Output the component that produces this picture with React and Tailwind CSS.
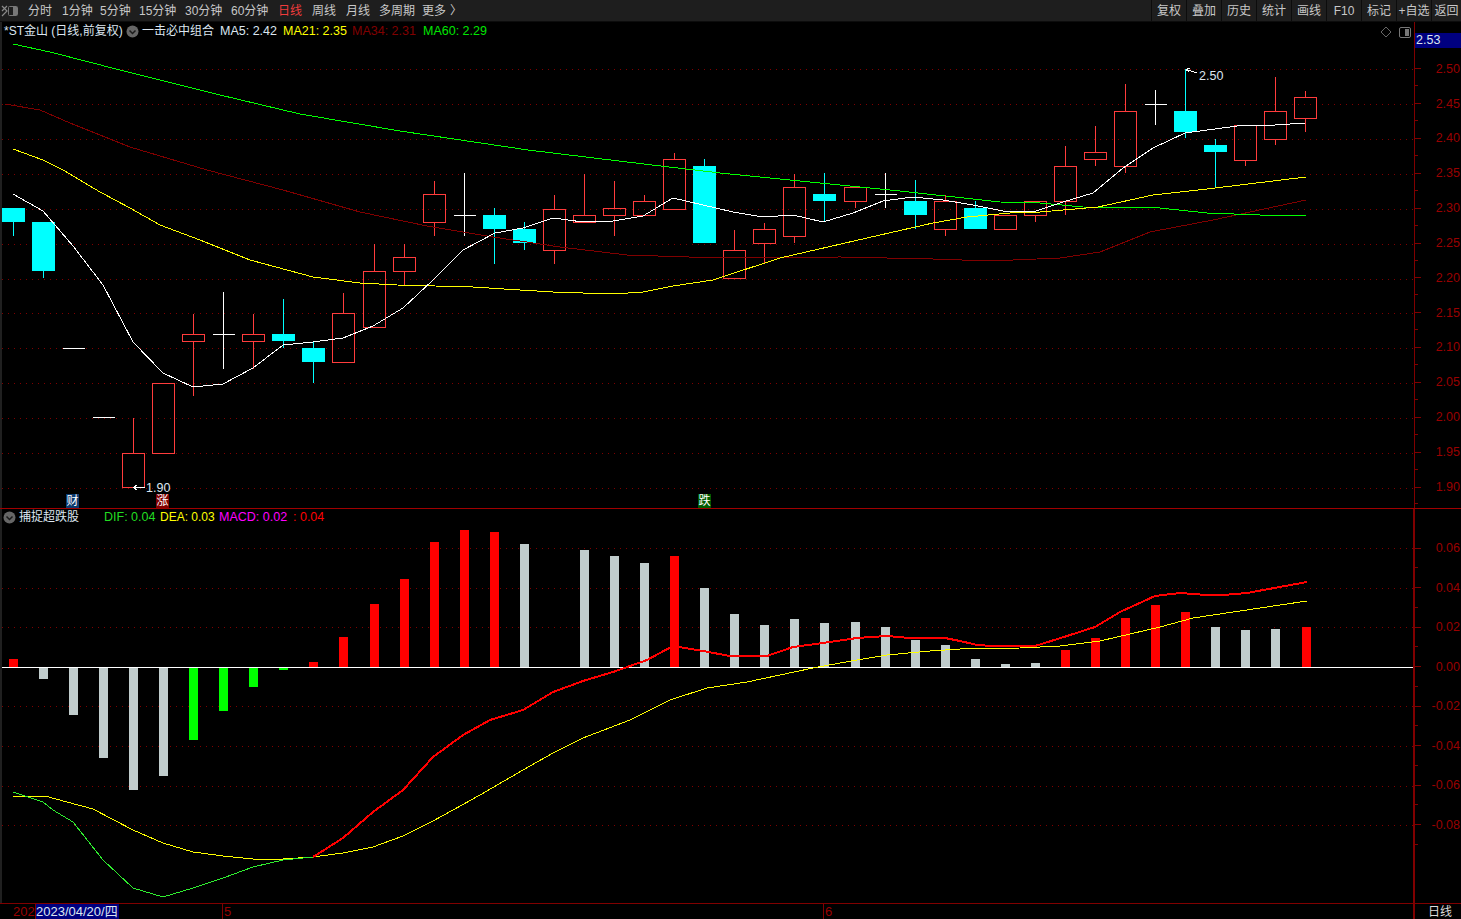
const tabs = [
  { label: "分时", cls: "w-[34px]" },
  { label: "1分钟", cls: "w-[38px]" },
  { label: "5分钟", cls: "w-[39px]" },
  { label: "15分钟", cls: "w-[46px]" },
  { label: "30分钟", cls: "w-[46px]" },
  { label: "60分钟", cls: "w-[47px]" },
  { label: "日线", cls: "w-[34px] text-[#f03c3c]" },
  { label: "周线", cls: "w-[34px]" },
  { label: "月线", cls: "w-[33px]" },
  { label: "多周期", cls: "w-[43px]" },
  { label: "更多", cls: "w-[28px]" },
];

const tools = ["复权", "叠加", "历史", "统计", "画线", "F10", "标记", "+自选"];

// [type, bodyTop, bodyBottom, wickTop, wickBottom], u = red, d = cyan, x = doji
const candles = [
  ["d", 208, 222, 208, 236],
  ["d", 222, 271, 222, 278],
  ["x", 348, 348, 348, 348],
  ["x", 417, 417, 417, 417],
  ["u", 453, 487, 418, 487],
  ["u", 383, 453, 383, 453],
  ["u", 334, 341, 314, 396],
  ["x", 334, 334, 292, 369],
  ["u", 334, 341, 314, 369],
  ["d", 334, 341, 299, 348],
  ["d", 348, 362, 341, 383],
  ["u", 313, 362, 293, 362],
  ["u", 271, 327, 244, 327],
  ["u", 257, 271, 244, 285],
  ["u", 194, 222, 181, 236],
  ["x", 215, 215, 173, 236],
  ["d", 215, 229, 208, 264],
  ["d", 229, 243, 222, 250],
  ["u", 209, 250, 195, 264],
  ["u", 215, 222, 174, 222],
  ["u", 208, 215, 181, 236],
  ["u", 201, 215, 195, 215],
  ["u", 159, 209, 153, 209],
  ["d", 166, 243, 159, 243],
  ["u", 250, 278, 230, 278],
  ["u", 229, 243, 223, 264],
  ["u", 187, 236, 174, 243],
  ["d", 194, 201, 173, 222],
  ["u", 187, 201, 187, 208],
  ["x", 194, 194, 173, 208],
  ["d", 201, 215, 180, 229],
  ["u", 201, 229, 195, 236],
  ["d", 208, 229, 201, 229],
  ["u", 215, 229, 215, 229],
  ["u", 201, 215, 201, 222],
  ["u", 166, 201, 146, 215],
  ["u", 152, 159, 126, 166],
  ["u", 111, 166, 84, 173],
  ["x", 104, 104, 90, 125],
  ["d", 111, 132, 69, 138],
  ["d", 145, 152, 139, 187],
  ["u", 125, 160, 125, 166],
  ["u", 111, 139, 77, 145],
  ["u", 97, 118, 91, 132],
];

const ma5 = "13,194 43,211 73,246 103,285 133,342 163,373 193,387 223,384 253,368 283,345 313,342 343,338 373,326 403,308 433,280 463,250 495,233 523,228 553,218 583,222 613,221 643,216 673,198 703,205 733,212 763,217 793,215 823,222 853,213 883,201 913,197 943,200 973,205 1003,211 1033,212 1063,202 1093,193 1123,168 1153,148 1185,133 1215,129 1245,125 1275,125 1305,123";
const ma21 = "13,149 43,160 63,170 100,192 130,208 160,225 200,240 250,260 313,277 360,283 397,285 473,287 520,290 553,292 583,293 613,294 643,292 673,286 713,280 780,258 867,238 933,223 967,217 1010,213 1040,212 1098,207 1153,195 1207,189 1306,177";
const ma34 = "5,104 40,110 70,123 130,147 207,170 283,190 360,212 427,226 493,237 560,247 627,255 720,258 840,257 933,259 990,261 1060,258 1100,252 1150,232 1213,220 1306,200";
const ma60 = "13,44 50,52 120,70 220,95 300,114 400,131 528,150 627,162 720,173 800,181 900,191 1000,202 1040,203 1083,207 1160,208 1207,213 1260,215 1306,215";

// [left, top, bottom, color]
const macdBars = [
  [9, 659, 667, "r"], [39, 667, 679, "g"], [69, 667, 715, "g"], [99, 667, 758, "g"],
  [129, 667, 790, "g"], [159, 667, 776, "g"], [189, 667, 740, "l"], [219, 667, 711, "l"],
  [249, 667, 687, "l"], [279, 667, 670, "l"], [309, 662, 667, "r"], [339, 637, 667, "r"],
  [370, 604, 667, "r"], [400, 579, 667, "r"], [430, 542, 667, "r"], [460, 530, 667, "r"],
  [490, 532, 667, "r"], [520, 544, 667, "g"], [580, 550, 667, "g"], [610, 556, 667, "g"],
  [640, 563, 667, "g"], [670, 556, 667, "r"], [700, 588, 667, "g"], [730, 614, 667, "g"],
  [760, 625, 667, "g"], [790, 619, 667, "g"], [820, 623, 667, "g"], [851, 622, 667, "g"],
  [881, 627, 667, "g"], [911, 640, 667, "g"], [941, 645, 667, "g"], [971, 659, 667, "g"],
  [1001, 664, 667, "g"], [1031, 663, 667, "g"], [1061, 650, 667, "r"], [1091, 638, 667, "r"],
  [1121, 618, 667, "r"], [1151, 605, 667, "r"], [1181, 612, 667, "r"], [1211, 627, 667, "g"],
  [1241, 630, 667, "g"], [1271, 629, 667, "g"], [1302, 627, 667, "r"],
];
const barColor = { r: "#ff0000", g: "#c0cccc", l: "#00ff00" };

const difGreen = "13,792 43,802 53,810 73,822 103,860 133,888 163,897 193,888 223,878 253,867 283,860 313,857";
const difRed = "313,857 343,838 373,812 403,790 433,757 463,735 490,720 523,710 553,692 583,681 613,672 647,660 673,646 703,651 730,656 767,656 793,647 823,643 857,638 887,636 910,638 945,638 960,641 977,645 993,646 1035,646 1067,636 1095,627 1120,612 1155,596 1180,593 1207,595 1223,595 1247,593 1307,582";
const dea = "13,796 45,796 67,802 93,809 133,830 163,843 193,852 223,856 253,859 283,859 313,857 343,853 373,847 403,836 433,821 453,810 480,795 523,770 553,753 583,738 630,720 670,700 707,688 747,682 813,668 857,660 887,655 930,651 960,649 1020,648 1060,646 1100,641 1160,627 1193,618 1307,601";

const mainGrid = [69, 104, 139, 174, 209, 244, 279, 313, 348, 383, 418, 453, 488];
const subGrid = [548, 588, 627, 706, 746, 786, 825];
const mainLabels = ["2.50", "2.45", "2.40", "2.35", "2.30", "2.25", "2.20", "2.15", "2.10", "2.05", "2.00", "1.95", "1.90"];
const subLabels = ["0.06", "0.04", "0.02", "0.00", "-0.02", "-0.04", "-0.06", "-0.08"];

function Candle({ data, i }) {
  const [type, top, bottom, wickTop, wickBottom] = data;
  const cx = Math.floor(13.3 + 30.0625 * i) + 0.5;
  const color = type === "u" ? "#ff3c3c" : type === "d" ? "#00ffff" : "#ffffff";
  return (
    <g>
      {wickTop < top && <line x1={cx} x2={cx} y1={wickTop} y2={top} stroke={color} />}
      {wickBottom > bottom && <line x1={cx} x2={cx} y1={bottom} y2={wickBottom} stroke={color} />}
      {type === "u" && (
        <rect x={cx - 11} y={top + 0.5} width={22} height={bottom - top} fill="none" stroke={color} />
      )}
      {type === "d" && <rect x={cx - 11.5} y={top} width={23} height={bottom - top} fill={color} />}
      {type === "x" && <line x1={cx - 11} x2={cx + 11} y1={top + 0.5} y2={top + 0.5} stroke={color} />}
    </g>
  );
}

function GridLines({ rows }) {
  return rows.map((y) => (
    <line key={y} x1={2} x2={1414} y1={y + 0.5} y2={y + 0.5} stroke="#800000" strokeDasharray="1 5" />
  ));
}

function Line({ points, color, width = 1 }) {
  return <polyline points={points} fill="none" stroke={color} strokeWidth={width} />;
}

function ChevronDot() {
  return (
    <svg width="13" height="13" viewBox="0 0 13 13" className="shrink-0">
      <circle cx="6.5" cy="6.5" r="6" fill="#666666" />
      <path d="M3.5 5.5 L6.5 8.5 L9.5 5.5" fill="none" stroke="#1a1a1a" strokeWidth="1.5" />
    </svg>
  );
}

function AxisRow({ label, rowClass }) {
  return (
    <div className={`relative flex items-center justify-between pr-[1px] ${rowClass}`}>
      <div className="h-px w-[6px] bg-[#800000]" />
      <span>{label}</span>
      <div className="absolute bottom-0 left-0 h-px w-[3px] bg-[#800000]" />
    </div>
  );
}

export default function App() {
  return (
    <div className="flex h-[919px] w-[1461px] flex-col overflow-hidden bg-black text-[12.5px] leading-none text-[#dce6f0] [font-family:'Liberation_Sans','Noto_Sans_CJK_SC',sans-serif]">
      {/* top toolbar */}
      <div className="flex h-[22px] shrink-0 items-center justify-between border-b border-[#0c0c0c] bg-[#1e1e1e] text-[12px] text-[#c8c8c8]">
        <div className="flex items-center">
          <svg width="18" height="14" viewBox="0 0 18 14" className="ml-[1px] mr-[9px] shrink-0">
            <path d="M1 2 L6 7 L1 12 M6 2 L1 7" fill="none" stroke="#8a8a8a" strokeWidth="1.2" />
            <rect x="7.5" y="2.5" width="9" height="9" rx="1" fill="#1e1e1e" stroke="#777777" />
            <rect x="12" y="3" width="4" height="8" fill="#777777" />
          </svg>
          {tabs.map((t) => (
            <span key={t.label} className={`shrink-0 whitespace-nowrap ${t.cls}`}>
              {t.label}
            </span>
          ))}
          <span className="text-[12px]">〉</span>
        </div>
        <div className="flex h-full items-center">
          {tools.map((t) => (
            <span
              key={t}
              className="flex h-full w-[35px] items-center justify-center whitespace-nowrap border-l border-[#0c0c0c]"
            >
              {t}
            </span>
          ))}
          <span className="flex h-full w-[30px] items-center justify-center whitespace-nowrap border-l border-[#0c0c0c]">
            返回
          </span>
        </div>
      </div>

      {/* price panel */}
      <div className="flex h-[486px] shrink-0">
        <div className="relative h-full w-[1415px] shrink-0 border-l-2 border-r border-l-[#202020] border-r-[#800000]">
          <svg width="1412" height="486" viewBox="2 22 1412 486" shapeRendering="crispEdges" className="block">
            <GridLines rows={mainGrid} />
            {candles.map((c, i) => (
              <Candle key={i} data={c} i={i} />
            ))}
            <Line points={ma34} color="#800000" />
            <Line points={ma60} color="#00ff00" />
            <Line points={ma21} color="#ffff00" />
            <Line points={ma5} color="#ffffff" />
            <path d="M133 487.5 L145 487.5 M133 487.5 L137 485 M133 487.5 L137 490" stroke="#ffffff" fill="none" />
            <path d="M1186 69.5 L1197 73 M1186 69.5 L1190 68 M1186 69.5 L1189 72" stroke="#ffffff" fill="none" />
            <text x="146" y="492" fill="#dce6f0" fontSize="12.5">1.90</text>
            <text x="1199" y="80" fill="#dce6f0" fontSize="12.5">2.50</text>
          </svg>

          {/* legend */}
          <div className="absolute left-[2px] top-[2px] flex h-[14px] items-center whitespace-nowrap">
            <span className="w-[122px] text-[12px]">*ST金山 (日线,前复权)</span>
            <ChevronDot />
            <span className="ml-[3px] w-[78px] text-[12px]">一击必中组合</span>
            <span className="w-[63px]">MA5: 2.42</span>
            <span className="w-[69px] text-[#ffff00]">MA21: 2.35</span>
            <span className="w-[71px] text-[#800000]">MA34: 2.31</span>
            <span className="text-[#00e600]">MA60: 2.29</span>
          </div>

          <div className="absolute right-[3px] top-[4px] flex items-center gap-[7px]">
            <svg width="12" height="12" viewBox="0 0 12 12">
              <path d="M6 1 L11 6 L6 11 L1 6 Z" fill="none" stroke="#666666" />
            </svg>
            <svg width="12" height="11" viewBox="0 0 12 11">
              <rect x="0.5" y="0.5" width="11" height="10" rx="1.5" fill="none" stroke="#777777" />
              <rect x="6" y="2" width="4" height="7" fill="#777777" />
            </svg>
          </div>

          <span className="absolute left-[64px] top-[472px] flex h-[14px] w-[13px] items-center justify-center bg-[#0c3a6e] text-[12px] text-white">财</span>
          <span className="absolute left-[154px] top-[472px] flex h-[14px] w-[13px] items-center justify-center bg-[#800000] text-[12px] text-white">涨</span>
          <span className="absolute left-[696px] top-[472px] flex h-[14px] w-[13px] items-center justify-center bg-[#005a00] text-[12px] text-white">跌</span>
        </div>

        <div className="flex-1 pt-[11px] text-[#990000]">
          <div className="flex h-[15px] items-center bg-[#000080] pl-[1px] text-[#dce6f0]">2.53</div>
          <div className="mt-[3.5px]">
            {mainLabels.map((l) => (
              <AxisRow key={l} label={l} rowClass="h-[34.85px]" />
            ))}
          </div>
        </div>
      </div>

      {/* macd panel */}
      <div className="flex h-[395px] shrink-0 border-t-[1.5px] border-[#a00000]">
        <div className="relative h-full w-[1415px] shrink-0 border-l-2 border-r-2 border-l-[#202020] border-r-[#800000]">
          <svg width="1411" height="394" viewBox="2 509 1411 394" shapeRendering="crispEdges" className="block">
            <GridLines rows={subGrid} />
            {macdBars.map(([x, top, bottom, c]) => (
              <rect key={x} x={x} y={top} width={9} height={bottom - top} fill={barColor[c]} />
            ))}
            <line x1={2} x2={1414} y1={667.5} y2={667.5} stroke="#ffffff" />
            <Line points={dea} color="#ffff00" />
            <Line points={difGreen} color="#2fee2f" />
            <Line points={difRed} color="#ff0000" width={2} />
          </svg>

          <div className="absolute left-[1px] top-[1px] flex h-[14px] items-center whitespace-nowrap">
            <ChevronDot />
            <span className="ml-[3px] w-[85px] text-[12px]">捕捉超跌股</span>
            <span className="w-[56px] text-[#22dd22]">DIF: 0.04</span>
            <span className="w-[59px] text-[12px] text-[#ffff00]">DEA: 0.03</span>
            <span className="w-[74px] text-[#ff00ff]">MACD: 0.02</span>
            <span className="text-[#ff0000]">: 0.04</span>
          </div>
        </div>

        <div className="flex-1 pt-[19.5px] text-[#990000]">
          {subLabels.map((l) => (
            <AxisRow key={l} label={l} rowClass="h-[39.5px]" />
          ))}
        </div>
      </div>

      {/* date bar */}
      <div className="flex h-[16px] flex-1 items-center border-t border-[#800000] text-[13px] text-[#990000]">
        <div className="flex h-full w-[1415px] shrink-0 items-center border-r-2 border-[#800000] pl-[13px]">
          <span className="w-[22px]">202</span>
          <span className="flex h-full w-[84px] items-center whitespace-nowrap border-l border-[#800000] bg-[#000080] text-[#dce6f0]">
            2023/04/20/四
          </span>
          <span className="ml-[103px] flex h-full w-[601px] items-center border-l border-[#800000] pl-[1px]">5</span>
          <span className="flex h-full items-center border-l border-[#800000] pl-[1px]">6</span>
        </div>
        <span className="ml-[13px] text-[12px] text-[#dcdcdc]">日线</span>
      </div>
    </div>
  );
}
